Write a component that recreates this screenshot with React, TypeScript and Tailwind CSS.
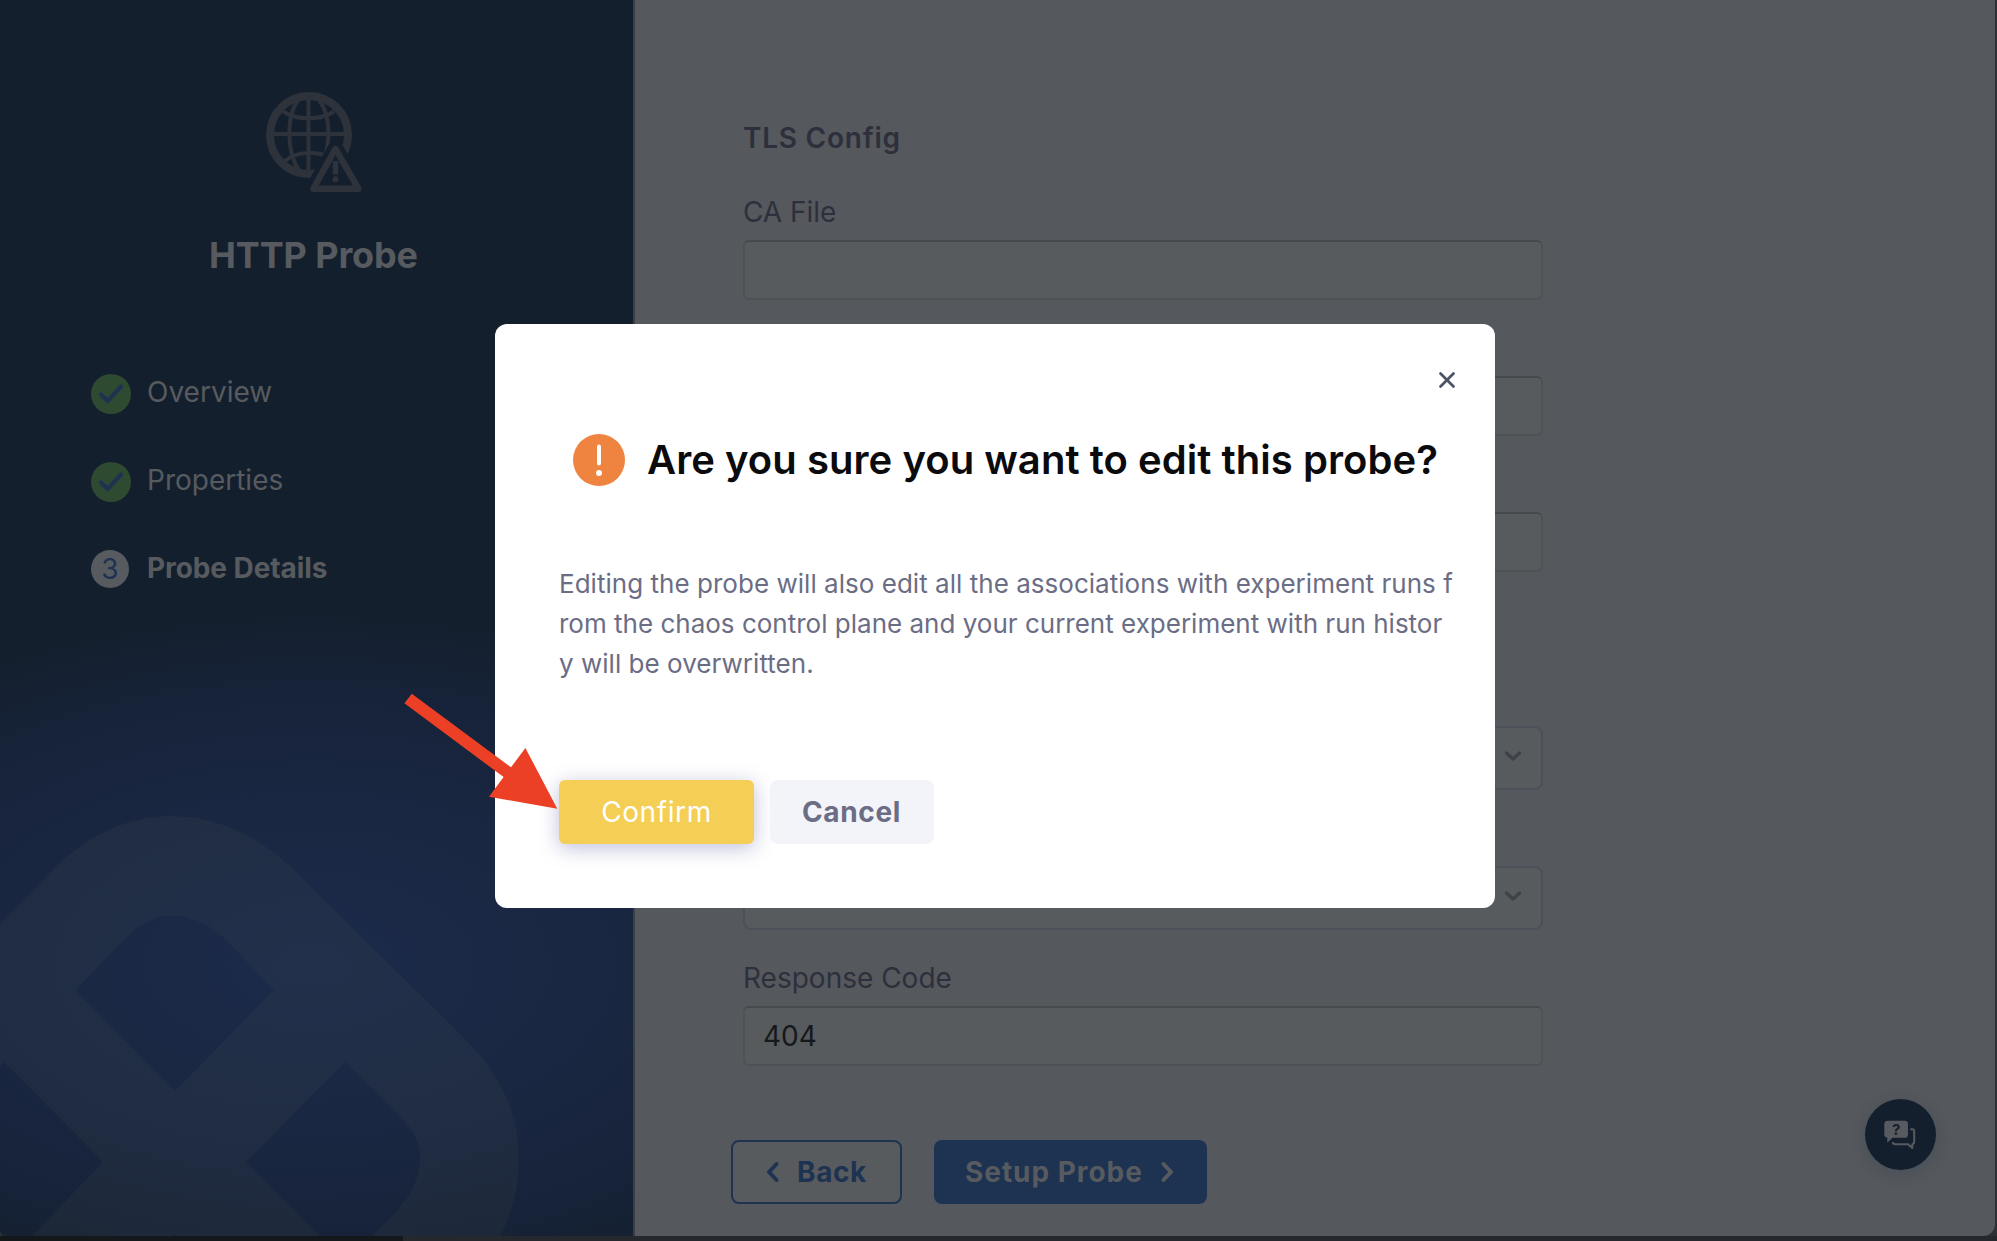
import React from 'react';

function GlobeAlert() {
  return (
    <svg className="h-[120px] w-[120px]" viewBox="0 0 120 120" fill="none" stroke="#2d323b">
      <circle cx="54" cy="53" r="39" strokeWidth="8" />
      <g strokeWidth="4">
        <path d="M53.500 14v78M15 52h78" />
        <path d="M44 17C31 33 31 71 45 90M63 17C77 33 77 71 62 90" />
        <path d="M28 29.500C42 38.500 65 38.500 79 29.500M29 79.500C42 68.500 64 68 79 78" />
      </g>
      <path d="M80.500 67L58.500 106.500h44.500z" stroke="#141f2e" strokeWidth="16" strokeLinejoin="round" fill="#141f2e" />
      <path d="M80.500 66.800L58.300 106.800h45.200z" strokeWidth="6.400" strokeLinejoin="round" />
      <path d="M80.500 79v13.500" strokeWidth="5.500" />
      <circle cx="80.500" cy="97.200" r="3" fill="#2d323b" stroke="none" />
    </svg>
  );
}

function Step({ label, done }: { label: string; done?: boolean }) {
  return (
    <li className="flex h-10 items-center">
      <span className="flex h-10 w-10 items-center">
        {done ? (
          <span className="flex h-10 w-10 items-center justify-center rounded-full bg-[#2e4b31]">
            <svg className="h-6 w-7" viewBox="0 0 28 24" fill="none" stroke="#1e3252" strokeWidth="4.200" strokeLinecap="round" strokeLinejoin="round">
              <path d="M4 12.500l6.500 6.500L24 4.500" />
            </svg>
          </span>
        ) : (
          <span className="-mt-0.5 flex h-[38px] w-[38px] items-center justify-center rounded-full bg-[#575b5f] text-[28px] text-[#1e3252]">3</span>
        )}
      </span>
      <span className={done ? 'ml-[16px] -mt-1 text-[28px] text-[#575b5f]' : 'ml-[16px] -mt-1 text-[28px] font-bold tracking-[-0.080px] text-[#575b5f]'}>
        {label}
      </span>
    </li>
  );
}

function SidebarMark() {
  return (
    <svg className="absolute inset-0 h-full w-full" viewBox="0 0 633 1236" fill="#4c5450" fillOpacity="0.125" fillRule="evenodd">
      <path d="M0 924L49 874C84 836 127 816 172 816C217 816 260 836 298 874L465 1039C502 1076 519 1115 519 1157C519 1186 513 1212 500 1236H372L396 1212C412 1194 420 1176 420 1157C420 1141 412 1128 396 1112L345 1062L246 1162L320 1236H177L175 1234L173 1236H32L103 1162L4 1062L0 1066ZM75.500 990L127 937C141 923 156 916 172 916C190 916 209 923 227 941L274 990L175 1091Z" />
    </svg>
  );
}

function Field({ value = '' }: { value?: string }) {
  return (
    <div className="flex h-[60px] w-[800px] items-center rounded-[6px] border-2 border-[#4e5155] border-t-[#474a4d] bg-[#575b5d] px-[18px] text-[28px] text-[#15181c]">
      {value}
    </div>
  );
}

function SelectField() {
  return (
    <div className="flex h-16 w-[800px] items-center justify-end rounded-[8px] border-2 border-[#4d5058] bg-[#575b5d] pr-[19px]">
      <svg className="-mt-1 h-3 w-[18px]" viewBox="0 0 18 12" fill="none" stroke="#3f4248" strokeWidth="3.400" strokeLinecap="round" strokeLinejoin="round">
        <path d="M2.500 3l6.500 6 6.500-6" />
      </svg>
    </div>
  );
}

function Chevron({ flip }: { flip?: boolean }) {
  return (
    <svg className="h-[22px] w-[14px]" viewBox="0 0 14 22" fill="none" stroke="currentColor" strokeWidth="4" strokeLinecap="round" strokeLinejoin="round">
      <path d={flip ? 'M3.500 3l7.500 8-7.500 8' : 'M10.500 3L3 11l7.500 8'} />
    </svg>
  );
}

function Sidebar() {
  return (
    <aside className="relative h-[1236px] w-[633px] shrink-0 overflow-hidden rounded-bl-[6px] bg-[#141f2e] bg-[radial-gradient(ellipse_620px_350px_at_310px_965px,#1c2b4b_0%,#1a2742_45%,#17233a_75%,#141f2e_100%)] pt-[82px]">
      <SidebarMark />
      <div className="relative ml-[255px]">
        <GlobeAlert />
      </div>
      <h1 className="relative mt-[30px] ml-[209px] text-[36px] leading-[46px] font-bold tracking-[-0.120px] text-[#575b5f]">HTTP Probe</h1>
      <ol className="relative mt-[96px] ml-[91px] flex flex-col gap-12">
        <Step label="Overview" done />
        <Step label="Properties" done />
        <Step label="Probe Details" />
      </ol>
    </aside>
  );
}

function FormPanel() {
  return (
    <main className="relative h-[1236px] w-[1362px] shrink-0 rounded-br-[12px] border-l-2 border-[#3b3e42] bg-[#55585d] pt-[118px] text-[28px] text-[#2d303c]">
      <div className="ml-[108px]">
        <h2 className="h-10 leading-10 font-semibold tracking-[0.750px]">TLS Config</h2>
        <label className="mt-[34px] block h-10 leading-10 tracking-[-0.050px]">CA File</label>
        <div className="mt-[8px] flex flex-col gap-[76px]">
          <Field />
          <Field />
          <Field />
        </div>
        <div className="mt-[154px] flex flex-col gap-[76px]">
          <SelectField />
          <SelectField />
        </div>
        <label className="mt-[28px] block h-10 leading-10">Response Code</label>
        <div className="mt-[8px]">
          <Field value="404" />
        </div>
      </div>
      <div className="mt-[74px] ml-[96px] flex gap-[32px] font-bold">
        <button className="flex h-16 w-[171px] items-center rounded-[8px] border-2 border-[#1e3252] bg-[#575b5d] pl-[33px] tracking-[0.600px] text-[#1e3252]">
          <Chevron />
          <span className="ml-[17px]">Back</span>
        </button>
        <button className="flex h-16 w-[273px] items-center rounded-[8px] bg-[#1e3252] pl-[31px] tracking-[0.950px] text-[#575b5f]">
          <span className="mr-[17px]">Setup Probe</span>
          <Chevron flip />
        </button>
      </div>
      <button className="absolute top-[1099px] right-[59px] h-[71px] w-[71px] rounded-full bg-[#141f2e] shadow-[0_4px_14px_rgba(40,60,75,0.3)]">
        <svg className="h-[71px] w-[71px]" viewBox="5 5 71 71" fill="none">
          <path d="M27.800 26.800h16.800q3.400 0 3.400 3.400v10.200q0 3.400-3.400 3.400H32.500L27.300 48.800V43.600q-3-0.400-3-3.200V30.200q0-3.400 3.500-3.400z" fill="#575b5f" />
          <path d="M50.300 35.200H52.500Q54.200 35.200 54.200 37V47.500Q54.200 50 52.300 50.200V54L48 50.200H35.500Q32.800 50.200 32.800 48" stroke="#575b5f" strokeWidth="2" strokeLinejoin="round" />
          <text x="36.100" y="41" textAnchor="middle" fontSize="15" fontWeight="700" fill="#141f2e">?</text>
        </svg>
      </button>
    </main>
  );
}

function ConfirmDialog() {
  return (
    <section className="absolute top-[324px] left-[495px] h-[584px] w-[1000px] rounded-[12px] bg-white">
      <div className="flex justify-end pt-[46px] pr-[38px]">
        <svg className="h-5 w-5" viewBox="0 0 20 20" fill="none" stroke="#4c5565" strokeWidth="2.800" strokeLinecap="round">
          <path d="M3.500 3.500l13 13M16.500 3.500l-13 13" />
        </svg>
      </div>
      <div className="mt-[44px] ml-[78px] flex h-[52px] items-center">
        <svg className="h-[52px] w-[52px]" viewBox="0 0 52 52">
          <circle cx="26" cy="26" r="26" fill="#ee8440" />
          <path d="M26 12.500v17" stroke="#fff" strokeWidth="4" strokeLinecap="round" />
          <circle cx="26" cy="39" r="3" fill="#fff" />
        </svg>
        <h2 className="ml-[22px] text-[40px] font-semibold tracking-[0.050px] whitespace-nowrap text-[#0b0b0d]">Are you sure you want to edit this probe?</h2>
      </div>
      <p className="mt-[78px] ml-16 text-[26px] leading-[40px] whitespace-nowrap text-[#6b6d85]">
        <span className="block tracking-[0.030px]">Editing the probe will also edit all the associations with experiment runs f</span>
        <span className="block tracking-[0.005px]">rom the chaos control plane and your current experiment with run histor</span>
        <span className="block tracking-[0.030px]">y will be overwritten.</span>
      </p>
      <div className="mt-[96px] ml-16 flex gap-4 text-[28px]">
        <button className="h-16 w-[195px] rounded-[6px] bg-[#f4ce55] tracking-[0.600px] text-white shadow-[0_4px_20px_rgba(96,97,160,0.4)]">Confirm</button>
        <button className="h-16 w-[164px] rounded-[8px] bg-[#f3f3fa] pr-px font-bold tracking-[0.650px] text-[#6b6d85]">Cancel</button>
      </div>
    </section>
  );
}

export default function App() {
  return (
    <div className="relative flex h-[1241px] w-[1997px] flex-col overflow-hidden bg-[#2d3036] font-['Inter',sans-serif]">
      <div className="flex h-[1236px]">
        <Sidebar />
        <FormPanel />
      </div>
      <div className="flex h-[5px] bg-[#25282d]">
        <div className="w-[403px] bg-[#15181b]" />
      </div>
      <ConfirmDialog />
      <svg className="absolute top-[690px] left-[400px] h-[122px] w-[160px]" viewBox="400 690 160 122" fill="#eb4025">
        <path d="M404.400 703.300L411.800 693.700L511 767.300L525.400 748L557.300 808.800L489 796.700L503.600 777Z" />
      </svg>
    </div>
  );
}
